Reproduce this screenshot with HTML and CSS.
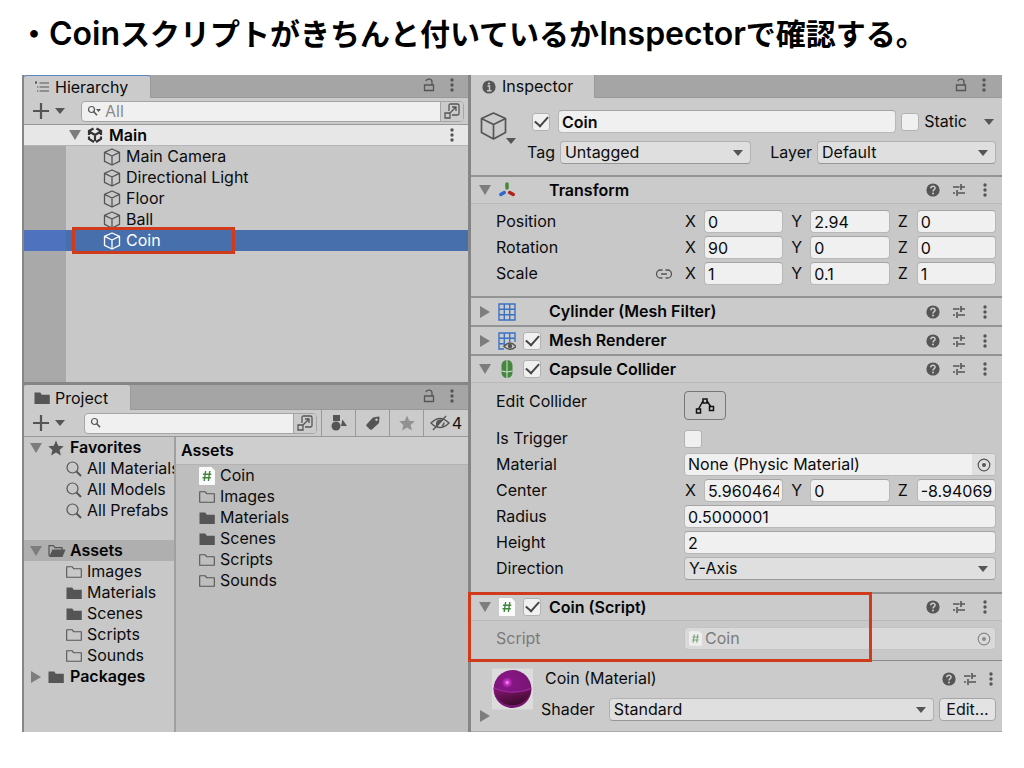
FILE: index.html
```html
<!DOCTYPE html>
<html lang="ja">
<head>
<meta charset="utf-8">
<title>CoinスクリプトがInspectorで確認する</title>
<link rel="stylesheet" href="styles.css">
</head>
<body>
<svg class="sprite" aria-hidden="true">
  <symbol id="lock" viewBox="0 0 12 14"><path d="M1.500 7h9v5.500h-9zM3 3.200C3.400.6 9 .2 9 4v3" fill="none" stroke="currentColor" stroke-width="1.300"/></symbol>
  <symbol id="dots" viewBox="0 0 4 14"><circle cx="2" cy="2" r="1.700"/><circle cx="2" cy="7" r="1.700"/><circle cx="2" cy="12" r="1.700"/></symbol>
  <symbol id="down" viewBox="0 0 12 12"><path d="M0 1h12L6 11z"/></symbol>
  <symbol id="right" viewBox="0 0 12 12"><path d="M1 0v12l10-6z"/></symbol>
  <symbol id="caret" viewBox="0 0 10 6"><path d="M0 0h10L5 6z"/></symbol>
  <symbol id="plus" viewBox="0 0 16 16"><path d="M8 0v16M0 8h16" stroke="currentColor" stroke-width="2.200"/></symbol>
  <symbol id="cube" viewBox="0 0 18 18"><path d="M9 1l7.500 3.400v9L9 17l-7.500-3.600v-9zM1.500 4.400L9 8l7.500-3.600M9 8v9" fill="none" stroke="currentColor" stroke-width="1.300" stroke-linejoin="round"/></symbol>
  <symbol id="list" viewBox="0 0 14 12"><path d="M4.500 2H14M4.500 6H14M4.500 10H14M0 1.500h2M2 6h1.300M2 10h1.300M1 0v3" fill="none" stroke="currentColor" stroke-width="1.200"/></symbol>
  <symbol id="expand" viewBox="0 0 16 16"><path d="M5 8V2.500Q5 1 6.500 1h7Q15 1 15 2.500v8q0 1.500-1.500 1.500H8M1 10h5v5H1zM6.500 9.500L12 4M8 4h4v4" fill="none" stroke="currentColor" stroke-width="1.300"/></symbol>
  <symbol id="folder" viewBox="0 0 16 14"><path d="M.5 1.500h5.700l1.600 2.200h8V13H.5z"/></symbol>
  <symbol id="folder-line" viewBox="0 0 16 14"><path d="M.7 1.700h5.300l1.600 2h7.700v8.600H.7z" fill="none" stroke="currentColor" stroke-width="1.100" stroke-linejoin="round"/></symbol>
  <symbol id="folder-open" viewBox="0 0 18 14"><path d="M1 12V1.700h4.500l1.500 2h7V6" fill="none" stroke="currentColor" stroke-width="1.200"/><path d="M4.500 5.500H17.500L14.500 13H1z"/></symbol>
  <symbol id="star" viewBox="0 0 16 16"><path d="M8 .5l2.200 5.200 5.600.5-4.200 3.700 1.300 5.500L8 12.500l-4.900 2.900 1.300-5.500L.2 6.200l5.600-.5z"/></symbol>
  <symbol id="search" viewBox="0 0 16 16"><circle cx="6.500" cy="6.500" r="5.500" fill="none" stroke="currentColor" stroke-width="1.200"/><path d="M10.500 10.500L15 15" stroke="currentColor" stroke-width="2"/></symbol>
  <symbol id="find" viewBox="0 0 14 12"><circle cx="4.500" cy="4.500" r="3" fill="none" stroke="currentColor" stroke-width="1.200"/><path d="M6.800 6.800L10 10.300" stroke="currentColor" stroke-width="1.500"/></symbol>
  <symbol id="help" viewBox="0 0 14 14"><circle cx="7" cy="7" r="6.600"/><path d="M4.800 5.400C4.900 2.500 9.300 2.700 9.100 5.300 9 6.700 7 6.700 7 8.500" fill="none" stroke="#ccc" stroke-width="1.500"/><circle cx="7" cy="10.600" r="1" fill="#ccc"/></symbol>
  <symbol id="sliders" viewBox="0 0 14 14"><path d="M1 4h6.500M10.500 4H13M9 1v6M1 10h2M6 10h7M5 7v6M9 4h2" fill="none" stroke="currentColor" stroke-width="1.600"/></symbol>
  <symbol id="script" viewBox="0 0 16 18"><path d="M1 0h11.500L16 3.500V17q0 1-1 1H1q-1 0-1-1V1q0-1 1-1z" fill="#fbfbfb"/><path d="M6.600 4L5.200 14M10.800 4L9.400 14M4 7.200h8.300M3.500 10.800h8.300" fill="none" stroke="#40853c" stroke-width="1.400"/></symbol>
  <symbol id="target" viewBox="0 0 14 14"><circle cx="7" cy="7" r="5.800" fill="none" stroke="currentColor" stroke-width="1.200"/><circle cx="7" cy="7" r="2"/></symbol>
  <symbol id="grid" viewBox="0 0 18 18"><path d="M1 1h16v16H1zM6.300 1v16M11.700 1v16M1 6.300h16M1 11.700h16" fill="none" stroke="#3a72c4" stroke-width="1.400"/></symbol>
</svg>

<header class="title"><h1>・<span>Coin</span>スクリプトがきちんと付いているか<span>Inspector</span>で確認する。</h1></header>

<main class="editor">
  <div class="left">
    <section class="hierarchy">
      <div class="tabs">
        <h2 class="tab tab-active"><svg class="i14"><use href="#list"/></svg>Hierarchy</h2>
        <div class="tab-tools">
          <button aria-label="Lock"><svg class="lock"><use href="#lock"/></svg></button>
          <button aria-label="Menu"><svg class="dots"><use href="#dots"/></svg></button>
        </div>
      </div>
      <div class="toolbar">
        <button class="add" aria-label="Create"><svg class="i16"><use href="#plus"/></svg><svg class="caret"><use href="#caret"/></svg></button>
        <div class="search">
          <svg class="find" viewBox="0 0 14 12"><use href="#find" width="14" height="12"/><path d="M9 4h5l-2.500 3z"/></svg>
          <input type="search" aria-label="Search hierarchy" placeholder="All">
          <button class="expand" aria-label="Open search"><svg class="i16"><use href="#expand"/></svg></button>
        </div>
      </div>
      <div class="scene">
        <button aria-label="Collapse"><svg class="fold"><use href="#down"/></svg></button>
        <svg class="i16 unity" viewBox="0 0 16 16"><path d="M6.500 1.500L2 4v4M9.500 1.500L14 4v4M2 9.500V12l5 3M14 9.500V12l-5 3M2.500 4.700L8 8l5.500-3.300M8 8v6" fill="none" stroke="currentColor" stroke-width="2.200"/></svg>
        <b>Main</b>
        <button class="scene-menu" aria-label="Scene menu"><svg class="dots"><use href="#dots"/></svg></button>
      </div>
      <ul class="objects">
        <li><svg class="i18"><use href="#cube"/></svg>Main Camera</li>
        <li><svg class="i18"><use href="#cube"/></svg>Directional Light</li>
        <li><svg class="i18"><use href="#cube"/></svg>Floor</li>
        <li><svg class="i18"><use href="#cube"/></svg>Ball</li>
        <li class="selected"><svg class="i18"><use href="#cube"/></svg>Coin<span class="mark mark-object"></span></li>
      </ul>
    </section>

    <section class="project">
      <div class="tabs">
        <h2 class="tab"><svg class="i16"><use href="#folder"/></svg>Project</h2>
        <div class="tab-tools">
          <button aria-label="Lock"><svg class="lock"><use href="#lock"/></svg></button>
          <button aria-label="Menu"><svg class="dots"><use href="#dots"/></svg></button>
        </div>
      </div>
      <div class="toolbar">
        <button class="add" aria-label="Create"><svg class="i16"><use href="#plus"/></svg><svg class="caret"><use href="#caret"/></svg></button>
        <div class="search">
          <svg class="find"><use href="#find"/></svg>
          <input type="search" aria-label="Search project">
          <button class="expand" aria-label="Open search"><svg class="i16"><use href="#expand"/></svg></button>
        </div>
        <div class="filters">
          <button aria-label="Filter by type"><svg class="i16" viewBox="0 0 16 16"><path d="M2 0h7v6H2zM11.500 4.500L16 11h-6z"/><circle cx="5" cy="11" r="4.500"/></svg></button>
          <button aria-label="Filter by label"><svg class="i14" viewBox="0 0 14 14"><path fill-rule="evenodd" d="M.5 8.500L7 1.500 12.500.5q1 0 1 1L13 7l-7 6.500q-1 .5-2 0L.5 10q-.5-.700 0-1.500zM10.500 2.500a1.200 1.200 0 100 2.400 1.200 1.200 0 000-2.400z"/></svg></button>
          <button class="faded" aria-label="Save search"><svg class="i16"><use href="#star"/></svg></button>
          <button class="hidden-count"><svg class="eye" viewBox="0 0 20 16"><path d="M1 8Q10-1 19 8 10 17 1 8zM3 15L16 1" fill="none" stroke="currentColor" stroke-width="1.400"/><path d="M6 11Q5 4 11 4.500L13 5 7 12z"/><path d="M12 11q2-1 2-3.500" fill="none" stroke="currentColor" stroke-width="1.500"/></svg>4</button>
        </div>
      </div>
      <div class="browser">
        <nav class="tree">
          <div class="branch"><button aria-label="Collapse"><svg class="fold"><use href="#down"/></svg></button><svg class="i16"><use href="#star"/></svg><b>Favorites</b></div>
          <ul>
            <li><svg class="i16"><use href="#search"/></svg>All Materials</li>
            <li><svg class="i16"><use href="#search"/></svg>All Models</li>
            <li><svg class="i16"><use href="#search"/></svg>All Prefabs</li>
          </ul>
          <div class="branch current"><button aria-label="Collapse"><svg class="fold"><use href="#down"/></svg></button><svg class="open"><use href="#folder-open"/></svg><b>Assets</b></div>
          <ul>
            <li><svg class="i16"><use href="#folder-line"/></svg>Images</li>
            <li><svg class="i16"><use href="#folder"/></svg>Materials</li>
            <li><svg class="i16"><use href="#folder"/></svg>Scenes</li>
            <li><svg class="i16"><use href="#folder-line"/></svg>Scripts</li>
            <li><svg class="i16"><use href="#folder-line"/></svg>Sounds</li>
          </ul>
          <div class="branch"><button aria-label="Expand"><svg class="fold"><use href="#right"/></svg></button><svg class="i16"><use href="#folder"/></svg><b>Packages</b></div>
        </nav>
        <div class="files">
          <h3>Assets</h3>
          <ul>
            <li><svg class="doc"><use href="#script"/></svg>Coin</li>
            <li><svg class="i16"><use href="#folder-line"/></svg>Images</li>
            <li><svg class="i16"><use href="#folder"/></svg>Materials</li>
            <li><svg class="i16"><use href="#folder"/></svg>Scenes</li>
            <li><svg class="i16"><use href="#folder-line"/></svg>Scripts</li>
            <li><svg class="i16"><use href="#folder-line"/></svg>Sounds</li>
          </ul>
        </div>
      </div>
    </section>
  </div>

  <section class="inspector">
    <div class="tabs">
      <h2 class="tab"><svg class="i14" viewBox="0 0 14 14"><circle cx="7" cy="7" r="6.600"/><path d="M5.500 6H7.500v4.500M5 10.700h4.500" fill="none" stroke="#ccc" stroke-width="1.400"/><circle cx="7" cy="3.500" r="1.100" fill="#ccc"/></svg>Inspector</h2>
      <div class="tab-tools">
        <button aria-label="Lock"><svg class="lock"><use href="#lock"/></svg></button>
        <button aria-label="Menu"><svg class="dots"><use href="#dots"/></svg></button>
      </div>
    </div>

    <div class="object">
      <button class="object-icon" aria-label="Select icon"><svg class="cube-large" viewBox="0 0 28 28"><path d="M13.500 1L25.500 6.500v14L13.500 27 1.500 20.500v-14zM1.500 6.500l12 6 12-6M13.500 12.500V27" fill="none" stroke="currentColor" stroke-width="1.700" stroke-linejoin="round"/></svg><svg class="caret"><use href="#caret"/></svg></button>
      <div class="object-fields">
        <div class="object-row">
          <input type="checkbox" aria-label="Active" checked>
          <input class="name" type="text" aria-label="Name" value="Coin">
          <label class="static"><input type="checkbox">Static</label>
          <button class="static-menu" aria-label="Static options"><svg class="caret"><use href="#caret"/></svg></button>
        </div>
        <div class="object-row tags">
          <label for="tag">Tag</label><select id="tag" class="tag"><option>Untagged</option></select>
          <label for="layer" class="layer-label">Layer</label><select id="layer" class="layer"><option>Default</option></select>
        </div>
      </div>
    </div>

    <section class="component">
      <header class="bar">
        <button aria-label="Collapse"><svg class="fold"><use href="#down"/></svg></button>
        <span class="kind"><svg class="i18" viewBox="0 0 18 18"><path d="M9 3v4" stroke="#45873f" stroke-width="3.500" stroke-linecap="round"/><path d="M6.300 11.500l-3.500 2" stroke="#2f68d0" stroke-width="3.500" stroke-linecap="round"/><path d="M11.700 11.500l3.500 2" stroke="#b02318" stroke-width="3.500" stroke-linecap="round"/></svg></span>
        <span class="toggle"></span><h3>Transform</h3>
        <div class="tools"><button aria-label="Help"><svg class="i14"><use href="#help"/></svg></button><button aria-label="Presets"><svg class="i14"><use href="#sliders"/></svg></button><button aria-label="Menu"><svg class="dots"><use href="#dots"/></svg></button></div>
      </header>
      <div class="props">
        <div class="prop"><span>Position</span><div class="vector"><label>X<input type="text" value="0"></label><label>Y<input type="text" value="2.94"></label><label>Z<input type="text" value="0"></label></div></div>
        <div class="prop"><span>Rotation</span><div class="vector"><label>X<input type="text" value="90"></label><label>Y<input type="text" value="0"></label><label>Z<input type="text" value="0"></label></div></div>
        <div class="prop"><span class="linked">Scale<button aria-label="Link axes"><svg class="link" viewBox="0 0 16 10"><path d="M6.500 1H4.500a4 4 0 000 8h2M9.500 1h2a4 4 0 010 8h-2M5 5h6" fill="none" stroke="currentColor" stroke-width="1.300"/></svg></button></span><div class="vector"><label>X<input type="text" value="1"></label><label>Y<input type="text" value="0.1"></label><label>Z<input type="text" value="1"></label></div></div>
      </div>
    </section>

    <section class="component closed">
      <header class="bar">
        <button aria-label="Expand"><svg class="fold"><use href="#right"/></svg></button>
        <span class="kind"><svg class="i18"><use href="#grid"/></svg></span>
        <span class="toggle"></span><h3>Cylinder (Mesh Filter)</h3>
        <div class="tools"><button aria-label="Help"><svg class="i14"><use href="#help"/></svg></button><button aria-label="Presets"><svg class="i14"><use href="#sliders"/></svg></button><button aria-label="Menu"><svg class="dots"><use href="#dots"/></svg></button></div>
      </header>
    </section>

    <section class="component closed">
      <header class="bar">
        <button aria-label="Expand"><svg class="fold"><use href="#right"/></svg></button>
        <span class="kind"><svg class="i18" viewBox="0 0 18 18"><path d="M6 17H1V1h16v9M6.300 1v14M11.700 1v9M1 6.300h16M1 11.700h6" fill="none" stroke="#3a72c4" stroke-width="1.400"/><path d="M6 14.500Q12 7.500 18 14.500 12 20 6 14.500z" fill="#ccc" stroke="#555" stroke-width="1.400"/><circle cx="12" cy="14" r="2.200" fill="#555"/></svg></span>
        <span class="toggle"><input type="checkbox" aria-label="Mesh Renderer enabled" checked></span><h3>Mesh Renderer</h3>
        <div class="tools"><button aria-label="Help"><svg class="i14"><use href="#help"/></svg></button><button aria-label="Presets"><svg class="i14"><use href="#sliders"/></svg></button><button aria-label="Menu"><svg class="dots"><use href="#dots"/></svg></button></div>
      </header>
    </section>

    <section class="component">
      <header class="bar">
        <button aria-label="Collapse"><svg class="fold"><use href="#down"/></svg></button>
        <span class="kind"><svg class="i18" viewBox="0 0 18 18"><rect x="3.500" width="11" height="18" rx="5.500" fill="#45873f"/><path d="M9 0v18M3.500 11Q9 13 14.500 11" fill="none" stroke="#d5e2d2" stroke-width="1"/></svg></span>
        <span class="toggle"><input type="checkbox" aria-label="Capsule Collider enabled" checked></span><h3>Capsule Collider</h3>
        <div class="tools"><button aria-label="Help"><svg class="i14"><use href="#help"/></svg></button><button aria-label="Presets"><svg class="i14"><use href="#sliders"/></svg></button><button aria-label="Menu"><svg class="dots"><use href="#dots"/></svg></button></div>
      </header>
      <div class="props collider">
        <div class="prop edit"><span>Edit Collider</span><button class="edit-shape" aria-label="Edit Collider"><svg class="shape" viewBox="0 0 20 18"><path d="M3.500 12L8 4M12 4l4 6" fill="none" stroke="#111" stroke-width="1.500"/><path d="M1.500 12h4v4h-4zM8 2h4v4H8zM14.500 9.500h4v4h-4z" fill="none" stroke="#111" stroke-width="1.500"/></svg></button></div>
        <div class="prop"><label for="trigger">Is Trigger</label><input id="trigger" type="checkbox"></div>
        <div class="prop"><label for="mat">Material</label><div class="ref"><input id="mat" type="text" value="None (Physic Material)"><button aria-label="Pick material"><svg class="i14"><use href="#target"/></svg></button></div></div>
        <div class="prop"><span>Center</span><div class="vector"><label>X<input type="text" value="5.960464e-08"></label><label>Y<input type="text" value="0"></label><label>Z<input type="text" value="-8.940697e-08"></label></div></div>
        <div class="prop"><label for="radius">Radius</label><input id="radius" type="text" value="0.5000001"></div>
        <div class="prop"><label for="height">Height</label><input id="height" type="text" value="2"></div>
        <div class="prop"><label for="dir">Direction</label><select id="dir"><option>Y-Axis</option></select></div>
      </div>
    </section>

    <section class="component script">
      <header class="bar">
        <button aria-label="Collapse"><svg class="fold"><use href="#down"/></svg></button>
        <span class="kind"><svg class="doc"><use href="#script"/></svg></span>
        <span class="toggle"><input type="checkbox" aria-label="Coin script enabled" checked></span><h3>Coin (Script)</h3>
        <div class="tools"><button aria-label="Help"><svg class="i14"><use href="#help"/></svg></button><button aria-label="Presets"><svg class="i14"><use href="#sliders"/></svg></button><button aria-label="Menu"><svg class="dots"><use href="#dots"/></svg></button></div>
      </header>
      <div class="props">
        <div class="prop disabled"><label for="script-ref">Script</label><div class="ref"><svg class="doc-small"><use href="#script"/></svg><input id="script-ref" type="text" value="Coin" disabled><button aria-label="Pick script" disabled><svg class="i14"><use href="#target"/></svg></button></div></div>
      </div>
      <span class="mark mark-script"></span>
    </section>

    <section class="material">
      <div class="preview">
        <svg class="ball" viewBox="0 0 40 40"><defs><radialGradient id="shine" cx=".36" cy=".33" r=".7"><stop offset="0" stop-color="#ffb8ff"/><stop offset=".07" stop-color="#d03ad0"/><stop offset=".2" stop-color="#861684"/><stop offset="1" stop-color="#761470"/></radialGradient><linearGradient id="shade" x2=".5" y2="1"><stop offset="0" stop-color="#8d1777"/><stop offset="1" stop-color="#3d0a2c"/></linearGradient></defs><path d="M0 0h40v40H0z" fill="#dcdcdc"/><circle cx="20" cy="20" r="18.500" fill="url(#shine)"/><path d="M1.600 19Q20 27 38.400 19.500A18.500 18.500 0 011.600 19z" fill="url(#shade)"/><path d="M2 19Q20 27 38 19.500" fill="none" stroke="#9b2b9e" stroke-width="1.200"/></svg>
        <button aria-label="Expand"><svg class="fold"><use href="#right"/></svg></button>
      </div>
      <div class="material-body">
        <div class="material-row"><h3>Coin (Material)</h3><div class="tools"><button aria-label="Help"><svg class="i14"><use href="#help"/></svg></button><button aria-label="Presets"><svg class="i14"><use href="#sliders"/></svg></button><button aria-label="Menu"><svg class="dots"><use href="#dots"/></svg></button></div></div>
        <div class="material-row"><label for="shader">Shader</label><select id="shader"><option>Standard</option></select><button class="edit-shader">Edit...</button></div>
      </div>
    </section>
  </section>
</main>
</body>
</html>
```
FILE: styles.css
```css
* { box-sizing: border-box; }
body { margin: 0; background: #fff; color: #0c0c0c; font: 16px/21px Inter, sans-serif; }
h1, h2, h3, ul { margin: 0; padding: 0; font-size: inherit; }
ul { list-style: none; }
b, .bar h3, .files h3 { font-weight: 600; color: #050505; }
button { display: flex; align-items: center; justify-content: center; flex: none; margin: 0; padding: 0; border: 0; background: none; color: #555; font: inherit; }
svg { display: block; flex: none; color: #555; fill: currentColor; }
.sprite { position: absolute; width: 0; height: 0; }
.i14 { width: 14px; height: 14px; }
.i16 { width: 16px; height: 16px; }
.i18 { width: 18px; height: 18px; }
.lock { width: 12px; height: 14px; }
.dots { width: 4px; height: 14px; }
.fold { width: 12px; height: 12px; color: #7d7d7d; }
.caret { width: 10px; height: 6px; }
.doc { width: 16px; height: 18px; }
.doc-small { width: 13px; height: 15px; }
.open { width: 18px; height: 14px; }
.find { width: 14px; height: 12px; }
.eye { width: 20px; height: 16px; }
.link { width: 16px; height: 10px; }

.title { height: 75px; padding: 12px 19px 0; }
.title h1 { font: 600 30px/44px Inter, "Noto Sans CJK JP", sans-serif; color: #000; white-space: nowrap; }
.title span { font-size: 32px; }

.editor { display: grid; grid-template-columns: minmax(0, 449fr) minmax(0, 531fr); margin: 0 22px 36px; background: #c8c8c8; }
.left { display: flex; flex-direction: column; min-width: 0; border: solid #868686; border-width: 0 3px 0 2px; }

.tabs { display: flex; justify-content: space-between; height: 23px; background: #a5a5a5; border-bottom: 1px solid #999; }
.tab { display: flex; align-items: center; gap: 6px; height: 23px; padding: 0 22px 0 11px; background: #cbcbcb; border-right: 1px solid #999; font-weight: 400; }
.tab-active { border-top: 1px solid #5b87c4; border-radius: 3px 3px 0 0; }
.tab-tools { display: flex; align-items: center; gap: 15px; padding: 0 14px 3px 0; }

.toolbar { display: flex; align-items: center; height: 27px; padding-left: 9px; background: #cbcbcb; border-bottom: 1px solid #999; }
.add { gap: 6px; }
.search { display: flex; align-items: center; flex: 1; min-width: 0; height: 21px; margin: 0 4px 0 16px; padding-left: 5px; background: #f0f0f0; border: 1px solid #a5a5a5; border-radius: 4px; overflow: hidden; }
.search input { flex: 1; min-width: 0; height: 19px; margin: 0; padding: 0 4px; border: 0; background: none; font: inherit; outline: 0; }
.search input::placeholder { color: #8a8a8a; }
.expand { width: 23px; height: 19px; background: #cbcbcb; border-left: 1px solid #a5a5a5; }

.hierarchy { min-height: 307px; }
.scene { display: flex; align-items: center; height: 21px; padding: 0 14px 0 45px; background: #e7e7e7; border-bottom: 1px solid #b5b5b5; }
.unity { margin: 0 6px; color: #333; }
.scene-menu { margin-left: auto; }
.objects { min-height: 236px; background: linear-gradient(90deg, #a9a9a9 42px, #c8c8c8 42px); }
.objects li { position: relative; display: flex; align-items: center; gap: 5px; height: 21px; padding-left: 79px; }
.objects .selected { background: linear-gradient(90deg, #4e72be 42px, #476fac 42px); color: #fff; }
.selected svg { color: #fff; }
.mark { position: absolute; border: 3px solid #d13b1c; pointer-events: none; }
.mark-object { top: -3px; bottom: -3px; left: 48px; width: 163px; }
.mark-script { top: -2px; left: -3px; bottom: -2px; width: 404px; }

.project { display: flex; flex-direction: column; flex: 1; border-top: 3px solid #868686; }
.project .tabs, .project .tab { height: 25px; }
.project .tab { gap: 5px; padding: 1px 22px 0 10px; border-radius: 3px 3px 0 0; }
.project .search { margin-left: 19px; }
.filters { display: flex; align-self: stretch; }
.filters button { width: 34px; border-left: 1px solid #999; }
.filters .faded svg { color: #919191; }
.filters .hidden-count { gap: 2px; width: 45px; color: #111; }
.browser { display: grid; grid-template-columns: minmax(0, 152fr) minmax(0, 292fr); flex: 1; }
.tree { min-width: 0; overflow: hidden; border-right: 2px solid #a0a0a0; white-space: nowrap; }
.branch { display: flex; align-items: center; height: 21px; padding-left: 6px; }
.branch > svg { margin: 0 6px; }
.branch > .open { margin-right: 4px; }
.current { margin-top: 19px; background: #afafaf; }
.tree li, .files li { display: flex; align-items: center; gap: 5px; height: 21px; padding-left: 42px; }
.files { background: #bebebe; }
.files h3 { height: 28px; padding: 3px 5px 0; background: #cecece; border-bottom: 1px solid #b2b2b2; }
.files li { padding-left: 23px; }

.inspector { min-width: 0; }
.inspector .tab { padding-right: 21px; }
.inspector .tab-tools { padding-right: 16px; }
.object { display: flex; height: 77px; padding: 12px 6px 0 9px; background: #cbcbcb; }
.object-icon { align-items: flex-end; align-self: flex-start; padding-top: 2px; }
.cube-large { width: 28px; height: 28px; }
.object-icon .caret { margin: 0 0 -4px -2px; }
.object-fields { display: flex; flex-direction: column; gap: 8px; flex: 1; min-width: 0; }
.object-row { display: flex; align-items: center; padding-left: 16px; }
.object-row .name { flex: 1; margin: 0 5px 0 8px; font-weight: 600; }
.static { display: flex; align-items: center; gap: 5px; }
.static-menu { margin: 0 2px 0 17px; }
.tags { gap: 5px; padding-left: 11px; }
.tag { flex: 191; }
.layer { flex: 178; }
.layer-label { margin-left: 14px; }

input[type=text], select { min-width: 0; width: 100%; height: 23px; margin: 0; padding: 0 3px; border: 1px solid #b8b8b8; border-top-color: #a5a5a5; border-radius: 4px; background: #f0f0f0; color: #0c0c0c; font: inherit; outline: 0; }
select { appearance: none; padding: 0 4px; border-color: #b2b2b2; border-bottom-color: #979797; background: #dfdfdf url("data:image/svg+xml,%3Csvg xmlns='http://www.w3.org/2000/svg' width='10' height='6'%3E%3Cpath d='M0 0h10L5 6z' fill='%23555'/%3E%3C/svg%3E") no-repeat right 7px center; }
.object-row select { width: 0; }
input[type=checkbox] { display: grid; place-items: center; flex: none; appearance: none; width: 18px; height: 18px; margin: 0; border: 1px solid #b2b2b2; border-radius: 3px; background: #f0f0f0; }
input[type=checkbox]:checked::before { content: ""; width: 11px; height: 6px; margin-top: -4px; border: solid #444; border-width: 0 0 2px 2px; rotate: -48deg; }

.component { position: relative; border-top: 2px solid #949494; }
.component.closed { height: 29px; }
.bar { display: flex; align-items: center; height: 27px; padding: 0 15px 0 8px; background: #cbcbcb; border-bottom: 1px solid #b9b9b9; }
.closed .bar { border-bottom: 0; }
.kind { display: flex; justify-content: center; width: 18px; margin: 0 7px; }
.toggle { width: 18px; margin-right: 8px; }
.tools { display: flex; align-items: center; gap: 12px; margin-left: auto; }
.tools .dots { margin-left: 5px; }
.props { display: grid; gap: 3px; padding: 6px 6px 11px 25px; }
.prop { display: grid; grid-template-columns: 188px minmax(0, 1fr); align-items: center; min-height: 23px; }
.linked { display: flex; justify-content: space-between; padding-right: 12px; }
.vector { display: grid; grid-template-columns: repeat(3, minmax(0, 1fr)); gap: 7px; }
.vector label { display: grid; grid-template-columns: 19px minmax(0, 1fr); align-items: center; padding-left: 1px; }
.collider { padding-top: 8px; padding-bottom: 12px; }
.edit { align-items: start; margin-bottom: 4px; }
.edit-shape { justify-self: start; width: 42px; height: 29px; border: 1px solid #777; border-radius: 4px; }
.shape { width: 20px; height: 18px; }
.ref { display: flex; align-items: center; height: 23px; background: #f0f0f0; border: 1px solid #b8b8b8; border-radius: 4px; overflow: hidden; }
.ref input[type=text] { border: 0; height: 21px; background: none; }
.ref button { width: 23px; height: 21px; background: #dfdfdf; }
.script .props { padding-bottom: 10px; }
.disabled { color: #7b7b7b; }
.disabled .ref { padding-left: 4px; background: #d9d9d9; border-color: #c4c4c4; }
.disabled .ref input { color: #7b7b7b; }
.disabled .ref button { background: none; }
.disabled svg { opacity: .6; }

.material { display: flex; height: 72px; padding: 7px 6px 0 8px; background: #cbcbcb; border-top: 1px solid #8a8a8a; border-bottom: 1px solid #aaa; }
.preview { display: flex; flex-direction: column; width: 54px; }
.preview button { align-self: flex-start; }
.ball { width: 41px; height: 42px; margin-left: 13px; }
.material-body { display: flex; flex-direction: column; gap: 9px; flex: 1; min-width: 0; }
.material-row { display: flex; align-items: center; padding-left: 8px; }
.material-row h3 { padding-left: 4px; font-weight: 400; }
.material-row .tools { gap: 7px; padding-right: 3px; }
.material-row select { flex: 1; margin: 0 5px 0 14px; }
.edit-shader { width: 57px; height: 23px; border: 1px solid #a5a5a5; border-radius: 4px; background: #e3e3e3; color: #111; }
```
